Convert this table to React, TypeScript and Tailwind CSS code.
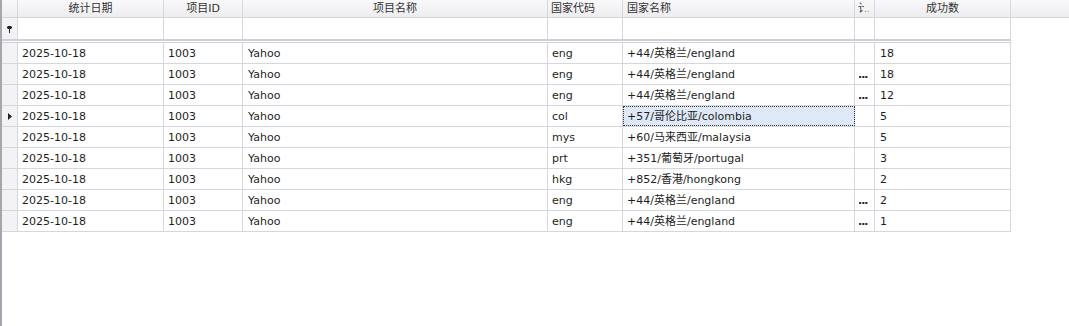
import React from 'react'

type Row = {
  date: string
  id: string
  name: string
  code: string
  country: string
  more: boolean
  count: string
}

const rows: Row[] = [
  { date: '2025-10-18', id: '1003', name: 'Yahoo', code: 'eng', country: '+44/英格兰/england', more: false, count: '18' },
  { date: '2025-10-18', id: '1003', name: 'Yahoo', code: 'eng', country: '+44/英格兰/england', more: true, count: '18' },
  { date: '2025-10-18', id: '1003', name: 'Yahoo', code: 'eng', country: '+44/英格兰/england', more: true, count: '12' },
  { date: '2025-10-18', id: '1003', name: 'Yahoo', code: 'col', country: '+57/哥伦比亚/colombia', more: false, count: '5' },
  { date: '2025-10-18', id: '1003', name: 'Yahoo', code: 'mys', country: '+60/马来西亚/malaysia', more: false, count: '5' },
  { date: '2025-10-18', id: '1003', name: 'Yahoo', code: 'prt', country: '+351/葡萄牙/portugal', more: false, count: '3' },
  { date: '2025-10-18', id: '1003', name: 'Yahoo', code: 'hkg', country: '+852/香港/hongkong', more: false, count: '2' },
  { date: '2025-10-18', id: '1003', name: 'Yahoo', code: 'eng', country: '+44/英格兰/england', more: true, count: '2' },
  { date: '2025-10-18', id: '1003', name: 'Yahoo', code: 'eng', country: '+44/英格兰/england', more: true, count: '1' },
]

const SELECTED = 3

const cols = 'grid grid-cols-[16px_146px_79px_305px_75px_232px_20px_136px]'
const cell = 'border-r border-[#d6d6de] overflow-hidden whitespace-nowrap'

const FilterIcon = () => (
  <svg width="5" height="7" viewBox="0 0 5 7" className="block">
    <path d="M0 1 L1 0 H4 L5 1 V2 L4 3 H1 L0 2 Z" fill="#222" />
    <rect x="2" y="3" width="1" height="4" fill="#222" />
  </svg>
)

const RowArrow = () => (
  <svg width="4" height="7" viewBox="0 0 4 7" className="block">
    <path d="M0 0 L4 3.5 L0 7 Z" fill="#222" />
  </svg>
)

export default function App() {
  return (
    <div
      className="flex h-[326px] w-[1069px] bg-white text-[11px] text-[#1e1e1e]"
      style={{ fontFamily: '"DejaVu Sans", "Noto Sans CJK SC", sans-serif' }}
    >
      {/* left frame edge */}
      <div className="w-[2px] shrink-0 bg-[#a6a6ae]" />

      <div className="flex-1 flex flex-col">
        {/* Header */}
        <div className="h-[18px] border-b border-[#d6d6de] bg-gradient-to-b from-[#f9f9fa] to-[#ededf0] text-[#333]">
          <div className={`${cols} h-[17px] w-[1009px] leading-[17px]`}>
            <div className={cell} />
            <div className={`${cell} text-center`}>统计日期</div>
            <div className={`${cell} text-center`}>项目ID</div>
            <div className={`${cell} text-center`}>项目名称</div>
            <div className={`${cell} pl-[3px]`}>国家代码</div>
            <div className={`${cell} pl-[4px]`}>国家名称</div>
            <div className={`${cell} pl-[3px] flex`}>
              <span className="inline-block w-[6px] shrink-0 overflow-hidden">计</span>
              <span className="text-[#c07030] text-[9px] leading-[19px]">..</span>
            </div>
            <div className={`${cell} text-center`}>成功数</div>
          </div>
        </div>

        {/* Filter row */}
        <div className={`${cols} h-[21px] w-[1009px]`}>
          <div className={`${cell} bg-[#f3f3f5] flex items-start pl-[5px] pt-[8px]`}>
            <FilterIcon />
          </div>
          <div className={cell} />
          <div className={cell} />
          <div className={cell} />
          <div className={cell} />
          <div className={cell} />
          <div className={cell} />
          <div className={cell} />
        </div>

        {/* separator */}
        <div className="w-[1009px] h-[4px] border-t-2 border-b border-[#cfcfd8] bg-white" />

        {/* Data rows */}
        <div className="w-[1009px]">
          {rows.map((r, i) => (
            <div key={i} className={`${cols} h-[21px] border-b border-[#d6d6de] leading-[22px]`}>
              <div className={`${cell} bg-[#f3f3f5] flex items-center pl-[6px]`}>
                {i === SELECTED && <RowArrow />}
              </div>
              <div className={`${cell} pl-[4px]`}>{r.date}</div>
              <div className={`${cell} pl-[4px]`}>{r.id}</div>
              <div className={`${cell} pl-[5px]`}>{r.name}</div>
              <div className={`${cell} pl-[4px]`}>{r.code}</div>
              <div
                className={`${cell} pl-[4px] ${
                  i === SELECTED ? 'bg-[#dfe8f7] outline-1 outline-dotted outline-[#333] -outline-offset-1' : ''
                }`}
              >
                {r.country}
              </div>
              <div className={`${cell} pl-[3px] font-bold tracking-[-1px]`}>{r.more ? '...' : ''}</div>
              <div className={`${cell} pl-[5px]`}>{r.count}</div>
            </div>
          ))}
        </div>
      </div>
    </div>
  )
}
